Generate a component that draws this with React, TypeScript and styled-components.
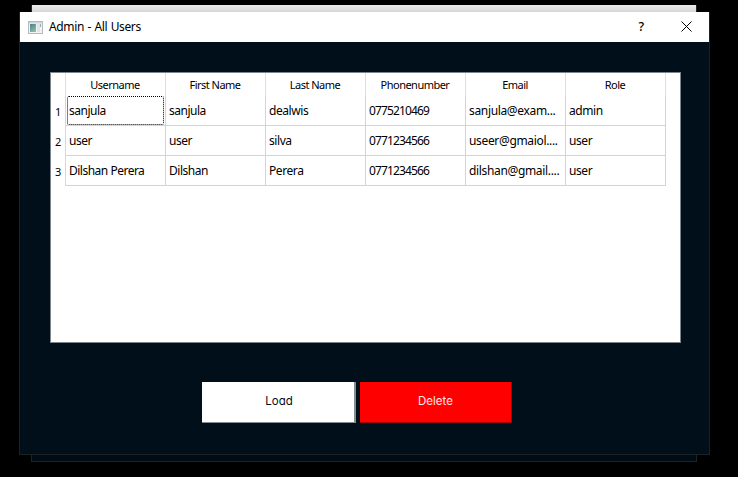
import React from "react";
import styled, { createGlobalStyle } from "styled-components";

const GlobalStyle = createGlobalStyle`
  * { box-sizing: border-box; }
  body { margin: 0; background: #000; overflow: hidden; }
`;

const Desktop = styled.main`
  position: relative;
  width: 738px;
  height: 477px;
  background: #000;
  font-family: "Noto Sans", "Open Sans", sans-serif;
  font-size: 12px;
  color: #000;
`;

const BackWindow = styled.div`
  position: absolute;
  left: 31px;
  top: 5px;
  width: 666px;
  height: 457px;
  background: linear-gradient(#ececec, #d6d6d6) top / 100% 7px no-repeat #000c15;
  border: solid #1c2427;
  border-width: 0 1px 1px;
`;

const DialogWindow = styled.section`
  position: absolute;
  left: 19px;
  top: 12px;
  width: 691px;
  height: 443px;
  display: flex;
  flex-direction: column;
  background: #000f1a;
  border: 1px solid #1a2226;
  border-top: 0;
`;

const TitleBar = styled.header`
  display: flex;
  align-items: center;
  flex: none;
  height: 30px;
  padding: 0 17px 0 8px;
  background: #fff;
`;

const Title = styled.h1`
  flex: 1;
  margin: 0 0 0 6px;
  font-size: 12px;
  font-weight: 400;
  line-height: 30px;
  letter-spacing: -0.36px;
  word-spacing: 0.7px;
`;

const TitleButton = styled.button`
  display: flex;
  padding: 0 0 1px;
  border: 0;
  background: none;
  color: #000;
  font: 500 12.5px/20px "Noto Sans", sans-serif;
  margin-left: 37px;
`;

const Body = styled.div`
  display: flex;
  flex-direction: column;
  flex: 1;
  padding: 30px 28px 0 30px;
`;

const TableFrame = styled.div`
  height: 271px;
  border: 1px solid #7c858b;
  background: #fff;
`;

const Grid = styled.div`
  display: grid;
  grid-template-columns: 15px repeat(6, 100px);
  grid-template-rows: 23px repeat(3, 30px);
`;

const HeaderCell = styled.div`
  border-right: 1px solid #dedede;
  padding-right: 1px;
  text-align: center;
  font-size: 11px;
  line-height: 24px;
  letter-spacing: -0.52px;
`;

const RowNumber = styled.div`
  border-right: 1px solid #d8d8d8;
  padding-left: 4px;
  font-size: 11px;
  line-height: 32px;
`;

const Cell = styled.div<{ $spacing: number; $focused?: boolean }>`
  position: relative;
  border: solid #d4d4d4;
  border-width: 0 1px 1px 0;
  padding-left: 3px;
  line-height: 29px;
  letter-spacing: ${(p) => p.$spacing}px;
  white-space: nowrap;
  ${(p) =>
    p.$focused &&
    `&::after {
      content: "";
      position: absolute;
      inset: 0 1px 0 1px;
      border: 1px dotted #000;
      border-radius: 2px;
    }`}
`;

const Actions = styled.div`
  display: flex;
  gap: 4px;
  margin: 39px 0 0 152px;
`;

const ActionButton = styled.button<{ $danger?: boolean }>`
  width: ${(p) => (p.$danger ? 152 : 154)}px;
  height: 41px;
  padding: ${(p) => (p.$danger ? "0 0 2px" : "0 0 2px 2px")};
  border: solid ${(p) => (p.$danger ? "#a40008" : "#828d94")};
  border-width: ${(p) => (p.$danger ? "0 1px 1px 0" : "0 2px 1px 0")};
  background: ${(p) => (p.$danger ? "#fe0000" : "#fff")};
  color: ${(p) => (p.$danger ? "#ffe5e5" : "#000f1a")};
  font-family: Inter, sans-serif;
  font-size: 11.5px;
  font-feature-settings: "cv11";
`;

const columns = ["Username", "First Name", "Last Name", "Phonenumber", "Email", "Role"];
const users = [
  ["sanjula", "sanjula", "dealwis", "0775210469", "sanjula@exam...", "admin"],
  ["user", "user", "silva", "0771234566", "useer@gmaiol....", "user"],
  ["Dilshan Perera", "Dilshan", "Perera", "0771234566", "dilshan@gmail....", "user"],
];
const spacings = [-0.5, -0.48, -0.42, -0.86, -0.34, -0.42];

function AppIcon() {
  return (
    <svg width="15" height="13" viewBox="0 0 15 13">
      <defs>
        <linearGradient id="pane" x1="0" y1="0" x2="0.6" y2="1">
          <stop offset="0" stopColor="#477f88" />
          <stop offset="1" stopColor="#8dbca7" />
        </linearGradient>
      </defs>
      <rect x=".5" y=".5" width="14" height="12" fill="#f0f2f4" stroke="#b3bbc0" />
      <rect x="1" y="1" width="13" height="1.5" fill="#cfd6da" />
      <rect x="2" y="3" width="6" height="8" fill="url(#pane)" />
      <rect x="9" y="3" width="3" height="8" fill="#dce5ee" />
      <rect x="12" y="3" width="1" height="3" fill="#9aa7b1" />
    </svg>
  );
}

export default function App() {
  return (
    <Desktop>
      <GlobalStyle />
      <BackWindow />
      <DialogWindow>
        <TitleBar>
          <AppIcon />
          <Title>Admin - All Users</Title>
          <TitleButton aria-label="Help">?</TitleButton>
          <TitleButton aria-label="Close">
            <svg width="11" height="11" viewBox="0 0 11 11">
              <path d="M.5 .5L10.5 10.5M10.5 .5L.5 10.5" stroke="#000" strokeWidth="1" />
            </svg>
          </TitleButton>
        </TitleBar>
        <Body>
          <TableFrame>
            <Grid>
              <HeaderCell />
              {columns.map((name) => (
                <HeaderCell key={name}>{name}</HeaderCell>
              ))}
              {users.map((user, row) => (
                <React.Fragment key={row}>
                  <RowNumber>{row + 1}</RowNumber>
                  {user.map((value, col) => (
                    <Cell key={col} $spacing={spacings[col]} $focused={row === 0 && col === 0}>
                      {value}
                    </Cell>
                  ))}
                </React.Fragment>
              ))}
            </Grid>
          </TableFrame>
          <Actions>
            <ActionButton>Load</ActionButton>
            <ActionButton $danger>Delete</ActionButton>
          </Actions>
        </Body>
      </DialogWindow>
    </Desktop>
  );
}
